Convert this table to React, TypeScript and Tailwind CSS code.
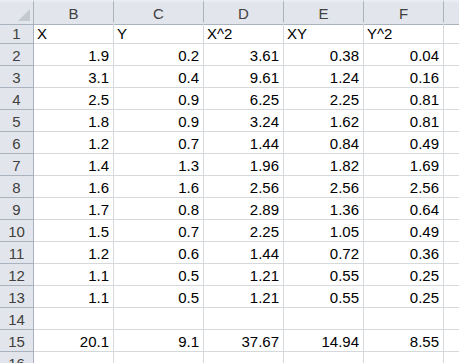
const cols = ['B', 'C', 'D', 'E', 'F'];

const rows: string[][] = [
  ['X', 'Y', 'X^2', 'XY', 'Y^2'],
  ['1.9', '0.2', '3.61', '0.38', '0.04'],
  ['3.1', '0.4', '9.61', '1.24', '0.16'],
  ['2.5', '0.9', '6.25', '2.25', '0.81'],
  ['1.8', '0.9', '3.24', '1.62', '0.81'],
  ['1.2', '0.7', '1.44', '0.84', '0.49'],
  ['1.4', '1.3', '1.96', '1.82', '1.69'],
  ['1.6', '1.6', '2.56', '2.56', '2.56'],
  ['1.7', '0.8', '2.89', '1.36', '0.64'],
  ['1.5', '0.7', '2.25', '1.05', '0.49'],
  ['1.2', '0.6', '1.44', '0.72', '0.36'],
  ['1.1', '0.5', '1.21', '0.55', '0.25'],
  ['1.1', '0.5', '1.21', '0.55', '0.25'],
  ['', '', '', '', ''],
  ['20.1', '9.1', '37.67', '14.94', '8.55'],
  ['', '', '', '', ''],
];

export default function App() {
  return (
    <div className="h-[363px] w-[459px] overflow-hidden bg-white font-['Liberation_Sans',Arial,sans-serif] text-[15px] leading-none">
      <div className="grid grid-cols-[34px_80px_90px_80px_80px_80px_1fr] auto-rows-[22px]">
        {/* select-all corner */}
        <div className="relative h-[25px] border-r border-b border-t-2 border-[#aab3bd] border-t-[#e9ecf0] bg-[#e2e6ec]">
          <svg className="absolute right-[2px] bottom-[2px]" width="14" height="14" viewBox="0 0 14 14">
            <polygon points="13,1 13,13 1,13" fill="#c4c9cf" />
          </svg>
        </div>
        {cols.map((c) => (
          <div
            key={c}
            className="flex h-[25px] items-center justify-center border-r border-b border-t-2 border-[#aab3bd] border-t-[#e9ecf0] bg-[#e2e6ec] pt-px text-[#404040]"
          >
            {c}
          </div>
        ))}
        <div className="h-[25px] border-b border-t-2 border-[#aab3bd] border-t-[#e9ecf0] bg-[#e2e6ec]" />

        {rows.map((r, i) => (
          <Row key={i} n={i + 1} cells={r} header={i === 0} />
        ))}
      </div>
    </div>
  );
}

function Row({ n, cells, header }: { n: number; cells: string[]; header: boolean }) {
  return (
    <>
      <div className="flex items-center justify-center border-r border-b border-[#aab3bd] bg-[#e2e6ec] pt-px text-[#404040]">
        {n}
      </div>
      {cells.map((v, j) => (
        <div
          key={j}
          className={
            header
              ? 'flex items-center justify-start border-r border-b border-[#d6d9dc] pl-[3px] pt-px text-black'
              : 'flex items-center justify-end border-r border-b border-[#d6d9dc] pr-[4px] pt-px text-black'
          }
        >
          {v}
        </div>
      ))}
      <div className="border-b border-[#d6d9dc]" />
    </>
  );
}
